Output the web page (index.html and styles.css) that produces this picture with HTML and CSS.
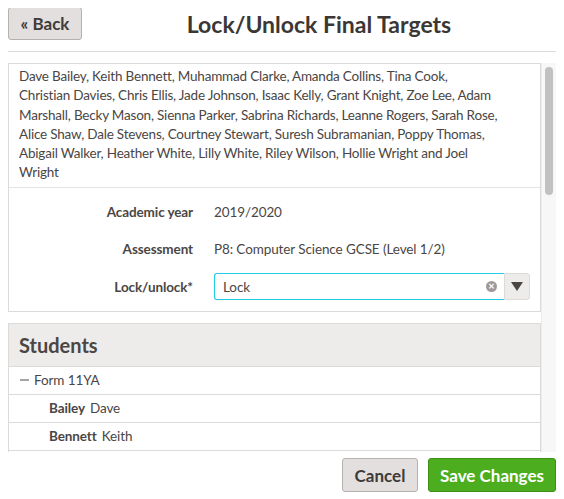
FILE: index.html
```html
<!DOCTYPE html>
<html lang="en">
<head>
    <meta charset="UTF-8">
    <meta name="viewport" content="width=device-width, initial-scale=1.0">
    <title>Lock/Unlock Final Targets</title>
    <link rel="stylesheet" href="styles.css">
</head>
<body>
    <div class="header">
        <button class="btn back">&laquo; Back</button>
        <h1>Lock/Unlock Final Targets</h1>
    </div>

    <div class="scroll-wrap">
        <div class="scroll">
            <div class="panel">
                <p class="names">Dave Bailey, Keith Bennett, Muhammad Clarke, Amanda Collins, Tina Cook,<br>
                    Christian Davies, Chris Ellis, Jade Johnson, Isaac Kelly, Grant Knight, Zoe Lee, Adam<br>
                    Marshall, Becky Mason, Sienna Parker, Sabrina Richards, Leanne Rogers, Sarah Rose,<br>
                    Alice Shaw, Dale Stevens, Courtney Stewart, Suresh Subramanian, Poppy Thomas,<br>
                    Abigail Walker, Heather White, Lilly White, Riley Wilson, Hollie Wright and Joel<br>
                    Wright</p>
                <div class="form">
                    <div class="label">Academic year</div>
                    <div class="value">2019/2020</div>
                    <div class="label">Assessment</div>
                    <div class="value">P8: Computer Science GCSE (Level 1/2)</div>
                    <div class="label">Lock/unlock*</div>
                    <div class="select">
                        <div class="select-input">
                            <span>Lock</span>
                            <span class="clear">&times;</span>
                        </div>
                        <div class="select-arrow"></div>
                    </div>
                </div>
            </div>

            <div class="panel students">
                <h2>Students</h2>
                <div class="row group"><span class="minus"></span>Form 11YA</div>
                <div class="row"><b>Bailey</b> Dave</div>
                <div class="row"><b>Bennett</b> Keith</div>
                <div class="row"><b>Clarke</b> Muhammad</div>
                <div class="row"><b>Collins</b> Amanda</div>
                <div class="row"><b>Cook</b> Tina</div>
                <div class="row"><b>Davies</b> Christian</div>
                <div class="row"><b>Ellis</b> Chris</div>
                <div class="row"><b>Johnson</b> Jade</div>
                <div class="row"><b>Kelly</b> Isaac</div>
                <div class="row"><b>Knight</b> Grant</div>
                <div class="row group"><span class="minus"></span>Form 11YB</div>
                <div class="row"><b>Lee</b> Zoe</div>
                <div class="row"><b>Marshall</b> Adam</div>
                <div class="row"><b>Mason</b> Becky</div>
                <div class="row"><b>Parker</b> Sienna</div>
                <div class="row"><b>Richards</b> Sabrina</div>
                <div class="row"><b>Rogers</b> Leanne</div>
                <div class="row"><b>Rose</b> Sarah</div>
                <div class="row"><b>Shaw</b> Alice</div>
                <div class="row"><b>Stevens</b> Dale</div>
                <div class="row group"><span class="minus"></span>Form 11YC</div>
                <div class="row"><b>Stewart</b> Courtney</div>
                <div class="row"><b>Subramanian</b> Suresh</div>
                <div class="row"><b>Thomas</b> Poppy</div>
                <div class="row"><b>Walker</b> Abigail</div>
                <div class="row"><b>White</b> Heather</div>
                <div class="row"><b>White</b> Lilly</div>
                <div class="row"><b>Wilson</b> Riley</div>
                <div class="row"><b>Wright</b> Hollie</div>
                <div class="row"><b>Wright</b> Joel</div>
            </div>
        </div>
        <div class="scrollbar"><div class="thumb"></div></div>
    </div>

    <div class="footer">
        <button class="btn cancel">Cancel</button>
        <button class="btn save">Save Changes</button>
    </div>
</body>
</html>
```

FILE: styles.css
```css
* { box-sizing: border-box; }
body {
    margin: 8px;
    font-family: Lato, "Open Sans", sans-serif;
    font-size: 13.5px;
    letter-spacing: -0.1px;
    color: #4a4644;
    background: #fff;
}

.btn {
    font-family: inherit;
    font-size: 17px;
    font-weight: bold;
    letter-spacing: 0;
    color: #3f3b39;
    background: #e3dfde;
    border: 1px solid #b5b1af;
    border-radius: 3px;
    height: 34px;
    padding: 0;
    white-space: nowrap;
    cursor: pointer;
}

.header {
    display: flex;
    align-items: center;
    padding-bottom: 11px;
    border-bottom: 1px solid #dddbda;
}

.back {
    height: 33px;
    margin-top: -1px;
    width: 74px;
}

h1 {
    flex: 1;
    margin: 0;
    text-align: center;
    font-size: 23px;
    letter-spacing: 0;
    color: #3b3735;
}

.scroll-wrap {
    display: flex;
    margin-top: 11px;
    height: 389px;
}

.scroll {
    flex: 1;
    overflow: hidden;
}

.scrollbar {
    width: 15px;
    background: #f7f7f7;
    border-left: 1px solid #ececec;
    padding: 4px 3px 0 3px;
}

.thumb {
    height: 128px;
    background: #c1c1c1;
    border-radius: 5px;
}

.panel {
    border: 1px solid #dddbda;
}

.names {
    margin: 0;
    padding: 3px 10px 4px;
    line-height: 19.3px;
    letter-spacing: -0.2px;
    border-bottom: 1px solid #e6e4e3;
}

.form {
    display: grid;
    grid-template-columns: 184px 1fr;
    grid-template-rows: 37px 37px 38px;
    column-gap: 21px;
    align-items: center;
    padding: 6px 10px 5px 0;
}

.label {
    text-align: right;
    font-weight: bold;
}

.select {
    display: flex;
    height: 27px;
}

.select-input {
    flex: 1;
    display: flex;
    align-items: center;
    justify-content: space-between;
    padding: 0 7px 0 8px;
    border: 1px solid #1fcde4;
    border-right: none;
    border-radius: 3px 0 0 3px;
}

.clear {
    width: 11px;
    height: 11px;
    border-radius: 50%;
    background: #9e9a98;
    color: #fff;
    font-size: 11px;
    font-weight: bold;
    line-height: 10px;
    text-align: center;
    letter-spacing: 0;
}

.select-arrow {
    width: 26px;
    background: #eeecea;
    border: 1px solid #dddbda;
    border-radius: 0 3px 3px 0;
    display: flex;
    align-items: center;
    justify-content: center;
}

.select-arrow::after {
    content: "";
    border-left: 6px solid transparent;
    border-right: 6px solid transparent;
    border-top: 9px solid #4a4644;
}

.students {
    margin-top: 11px;
}

.students h2 {
    margin: 0;
    height: 43px;
    padding: 0 10px;
    display: flex;
    align-items: center;
    background: #eeeceb;
    font-size: 20px;
    letter-spacing: 0;
    color: #4a4644;
    border-bottom: 1px solid #dddbda;
}

.row {
    height: 28px;
    display: flex;
    align-items: center;
    gap: 5px;
    padding-left: 40px;
    border-bottom: 1px solid #dddbda;
}

.row.group {
    padding-left: 11px;
}

.minus {
    width: 9px;
    height: 2px;
    background: #a8a4a2;
}

.footer {
    display: flex;
    justify-content: flex-end;
    gap: 10px;
    margin-top: 6px;
}

.cancel {
    width: 76px;
}

.save {
    color: #fff;
    background: #4cae1f;
    border-color: #3b8f15;
    width: 128px;
}
```
